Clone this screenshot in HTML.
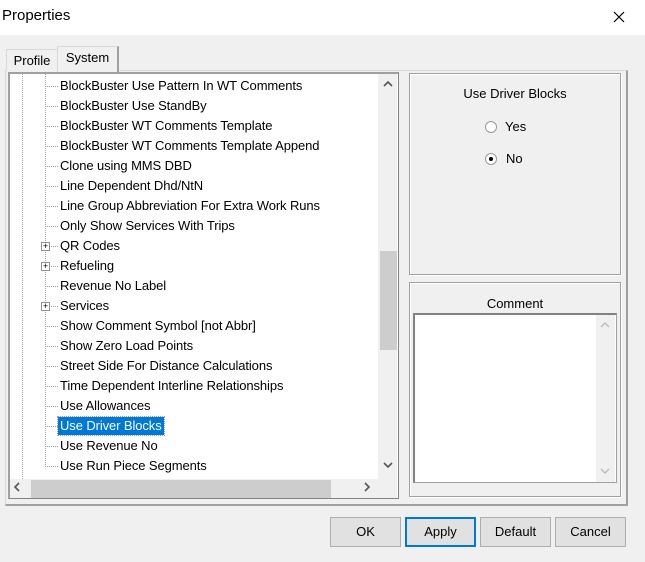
<!DOCTYPE html>
<html><head><style>
*{margin:0;padding:0;box-sizing:border-box}
body{width:645px;height:562px;background:#f0f0f0;font-family:"Liberation Sans",sans-serif;font-size:13px;color:#000;position:relative;overflow:hidden}
.abs{position:absolute}
.title{left:0;top:0;width:645px;height:35px;background:#fff}
.tree{left:8px;top:72px;width:391px;height:427px;background:#fff;border:1px solid #828282;border-top:2px solid #a0a0a0;border-left:2px solid #a0a0a0}
.row{position:absolute;left:48px;height:18px;line-height:18px;font-size:13px;white-space:nowrap;padding:0 2px;letter-spacing:-0.1px}
.dash{position:absolute;left:37px;width:11px;border-top:1px dotted #a0a0a0}
.plus{position:absolute;left:31px;width:9px;height:9px;border:1px solid #919191;background:#fff;font-size:9px;line-height:7px;text-align:center}
.grp{border:1px solid #a0a0a0;box-shadow:inset 1px 1px 0 #fff,1px 1px 0 #fff}
.btn{top:517px;height:30px;width:71px;border:1px solid #adadad;background:#e1e1e1;text-align:center;line-height:28px;font-size:13px}
svg{position:absolute}
</style></head><body>
<div class="abs title"></div>
<div class="abs" style="left:2px;top:7px;font-size:15px">Properties</div>
<svg style="left:613px;top:11px" width="12" height="12"><path d="M1 1L11 11M11 1L1 11" stroke="#000" stroke-width="1.2"/></svg>
<div class="abs" style="left:5px;top:70px;width:623px;height:436px;border:1px solid #d9d9d9;border-right:2px solid #a0a0a0;border-bottom:2px solid #a0a0a0"></div>
<div class="abs" style="left:6px;top:49px;width:52px;height:22px;border:1px solid #d9d9d9;border-bottom:none;background:#f0f0f0;text-align:center;line-height:22px;font-size:13px">Profile</div>
<div class="abs" style="left:57px;top:46px;width:62px;height:26px;border:1px solid #d9d9d9;border-right:2px solid #a0a0a0;border-bottom:none;background:#f0f0f0;text-align:center;line-height:22px;font-size:13px">System</div>
<div class="abs tree">
 <div class="abs" style="left:12px;top:0;height:405px;border-left:1px dotted #a0a0a0"></div>
 <div class="abs" style="left:35px;top:0;height:393px;border-left:1px dotted #a0a0a0"></div>
 <div style="position:absolute;left:0;top:2px">
 <div class="dash" style="top:10px"></div><div class="row" style="top:1px">BlockBuster Use Pattern In WT Comments</div>
 <div class="dash" style="top:30px"></div><div class="row" style="top:21px">BlockBuster Use StandBy</div>
 <div class="dash" style="top:50px"></div><div class="row" style="top:41px">BlockBuster WT Comments Template</div>
 <div class="dash" style="top:70px"></div><div class="row" style="top:61px">BlockBuster WT Comments Template Append</div>
 <div class="dash" style="top:90px"></div><div class="row" style="top:81px">Clone using MMS DBD</div>
 <div class="dash" style="top:110px"></div><div class="row" style="top:101px">Line Dependent Dhd/NtN</div>
 <div class="dash" style="top:130px"></div><div class="row" style="top:121px">Line Group Abbreviation For Extra Work Runs</div>
 <div class="dash" style="top:150px"></div><div class="row" style="top:141px">Only Show Services With Trips</div>
 <div class="dash" style="top:170px"></div><div class="plus" style="top:166px">+</div><div class="row" style="top:161px">QR Codes</div>
 <div class="dash" style="top:190px"></div><div class="plus" style="top:186px">+</div><div class="row" style="top:181px">Refueling</div>
 <div class="dash" style="top:210px"></div><div class="row" style="top:201px">Revenue No Label</div>
 <div class="dash" style="top:230px"></div><div class="plus" style="top:226px">+</div><div class="row" style="top:221px">Services</div>
 <div class="dash" style="top:250px"></div><div class="row" style="top:241px">Show Comment Symbol [not Abbr]</div>
 <div class="dash" style="top:270px"></div><div class="row" style="top:261px">Show Zero Load Points</div>
 <div class="dash" style="top:290px"></div><div class="row" style="top:281px">Street Side For Distance Calculations</div>
 <div class="dash" style="top:310px"></div><div class="row" style="top:301px">Time Dependent Interline Relationships</div>
 <div class="dash" style="top:330px"></div><div class="row" style="top:321px">Use Allowances</div>
 <div class="dash" style="top:350px"></div><div class="row" style="top:341px;background:#0078d7;color:#fff;outline:1px dotted #99c">Use Driver Blocks</div>
 <div class="dash" style="top:370px"></div><div class="row" style="top:361px">Use Revenue No</div>
 <div class="dash" style="top:390px"></div><div class="row" style="top:381px">Use Run Piece Segments</div>
 </div>
 <div class="abs" style="left:368px;top:0;width:19px;height:405px;background:#f0f0f0"></div>
 <div class="abs" style="left:370px;top:177px;width:17px;height:99px;background:#cdcdcd"></div>
 <div class="abs" style="left:0;top:405px;width:387px;height:19px;background:#f0f0f0"></div>
 <div class="abs" style="left:21px;top:406px;width:300px;height:18px;background:#cdcdcd"></div>
</div>
<svg style="left:383px;top:80px" width="10" height="8"><path d="M1 6L5 2L9 6" fill="none" stroke="#555" stroke-width="1.6"/></svg>
<svg style="left:383px;top:461px" width="10" height="8"><path d="M1 2L5 6L9 2" fill="none" stroke="#555" stroke-width="1.6"/></svg>
<svg style="left:13px;top:482px" width="8" height="10"><path d="M6 1L2 5L6 9" fill="none" stroke="#555" stroke-width="1.6"/></svg>
<svg style="left:363px;top:482px" width="8" height="10"><path d="M2 1L6 5L2 9" fill="none" stroke="#555" stroke-width="1.6"/></svg>
<div class="abs grp" style="left:409px;top:73px;width:212px;height:202px"></div>
<div class="abs" style="left:409px;top:86px;width:212px;text-align:center">Use Driver Blocks</div>
<div class="abs" style="left:485px;top:121px;width:12px;height:12px;border-radius:50%;border:1px solid #999;background:#fff"></div>
<div class="abs" style="left:505px;top:119px">Yes</div>
<div class="abs" style="left:485px;top:153px;width:12px;height:12px;border-radius:50%;border:1px solid #999;background:#fff"><div style="position:absolute;left:3px;top:3px;width:4px;height:4px;border-radius:50%;background:#000"></div></div>
<div class="abs" style="left:506px;top:151px">No</div>
<div class="abs grp" style="left:409px;top:282px;width:212px;height:215px"></div>
<div class="abs" style="left:409px;top:296px;width:212px;text-align:center">Comment</div>
<div class="abs" style="left:413px;top:313px;width:204px;height:170px;background:#fff;border:1px solid #a0a0a0;border-top:2px solid #828282;border-left:2px solid #828282"></div>
<div class="abs" style="left:596px;top:315px;width:19px;height:167px;background:#f0f0f0"></div>
<svg style="left:600px;top:321px" width="10" height="8"><path d="M1 6L5 2L9 6" fill="none" stroke="#bbb" stroke-width="1.4"/></svg>
<svg style="left:600px;top:467px" width="10" height="8"><path d="M1 2L5 6L9 2" fill="none" stroke="#bbb" stroke-width="1.4"/></svg>
<div class="abs btn" style="left:330px">OK</div>
<div class="abs btn" style="left:405px;border:1px solid #0078d7;box-shadow:inset 0 0 0 1px #0078d7">Apply</div>
<div class="abs btn" style="left:480px">Default</div>
<div class="abs btn" style="left:555px">Cancel</div>
</body></html>
